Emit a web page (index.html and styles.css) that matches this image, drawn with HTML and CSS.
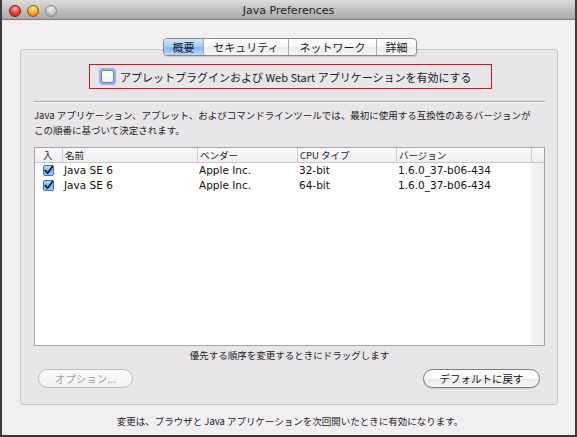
FILE: index.html
```html
<!DOCTYPE html>
<html lang="ja">
<head>
<meta charset="utf-8">
<title>Java Preferences</title>
<link rel="stylesheet" href="styles.css">
</head>
<body>
<div class="window">
  <div class="titlebar">
    <div class="lights">
      <span class="light red"></span>
      <span class="light amber"></span>
      <span class="light gray"></span>
    </div>
    <div class="title">Java Preferences</div>
    <div></div>
  </div>
  <div class="content">
    <div class="tabs">
      <span class="tab selected t1">概要</span>
      <span class="tab t2">セキュリティ</span>
      <span class="tab t3">ネットワーク</span>
      <span class="tab t4">詳細</span>
    </div>
    <div class="group">
      <div class="enable-box">
        <span class="focus-cb"></span>
        <span class="enable-label">アプレットプラグインおよび Web Start アプリケーションを有効にする</span>
      </div>
      <div class="separator"></div>
      <p class="desc">Java アプリケーション、アプレット、およびコマンドラインツールでは、最初に使用する互換性のあるバージョンが<br>この順番に基づいて決定されます。</p>
      <div class="table">
        <div class="thead">
          <span class="th first">入</span>
          <span class="th">名前</span>
          <span class="th">ベンダー</span>
          <span class="th">CPU タイプ</span>
          <span class="th">バージョン</span>
          <span class="th"></span>
        </div>
        <div class="tbody">
          <div class="tr">
            <span class="td first"><svg class="check" viewBox="0 0 11 11"><rect x="0.5" y="0.5" width="10" height="10" rx="1.5" fill="url(#cbg)" stroke="#3d6fb8"/><path d="M2.3 5.6 L4.6 8.3 L9.6 1.2" fill="none" stroke="#0d1e3a" stroke-width="1.7" stroke-linecap="round" stroke-linejoin="round"/><defs><linearGradient id="cbg" x1="0" y1="0" x2="0" y2="1"><stop offset="0" stop-color="#c9def8"/><stop offset="0.5" stop-color="#7fb0ec"/><stop offset="1" stop-color="#a9cdf7"/></linearGradient></defs></svg></span>
            <span class="td">Java SE 6</span>
            <span class="td">Apple Inc.</span>
            <span class="td">32-bit</span>
            <span class="td">1.6.0_37-b06-434</span>
            <span class="td"></span>
          </div>
          <div class="tr">
            <span class="td first"><svg class="check" viewBox="0 0 11 11"><rect x="0.5" y="0.5" width="10" height="10" rx="1.5" fill="url(#cbg)" stroke="#3d6fb8"/><path d="M2.3 5.6 L4.6 8.3 L9.6 1.2" fill="none" stroke="#0d1e3a" stroke-width="1.7" stroke-linecap="round" stroke-linejoin="round"/></svg></span>
            <span class="td">Java SE 6</span>
            <span class="td">Apple Inc.</span>
            <span class="td">64-bit</span>
            <span class="td">1.6.0_37-b06-434</span>
            <span class="td"></span>
          </div>
        </div>
      </div>
      <div class="hint">優先する順序を変更するときにドラッグします</div>
      <div class="buttons">
        <span class="btn disabled options">オプション...</span>
        <span class="btn defaults">デフォルトに戻す</span>
      </div>
    </div>
    <div class="footer">変更は、ブラウザと Java アプリケーションを次回開いたときに有効になります。</div>
  </div>
</div>
</body>
</html>
```
FILE: styles.css
```css
html, body {
  margin: 0;
  padding: 0;
}
body {
  width: 577px;
  height: 437px;
  background: #3b3b3d;
  overflow: hidden;
  font-family: "Noto Sans CJK JP", "DejaVu Sans", sans-serif;
  color: #1c1c1c;
}
.window {
  margin-left: 2px;
  width: 573px;
  height: 435px;
  overflow: hidden;
  display: flex;
  flex-direction: column;
}
.titlebar {
  height: 19px;
  border-bottom: 1px solid #7a7a7a;
  background: linear-gradient(#dcdcdc, #c4c4c4 45%, #a9a9a9);
  display: grid;
  grid-template-columns: 1fr auto 1fr;
  align-items: center;
}
.lights {
  display: flex;
  gap: 6px;
  padding-left: 7px;
  padding-top: 1px;
}
.light {
  width: 12px;
  height: 12px;
  border-radius: 50%;
  box-sizing: border-box;
}
.light.red {
  background: radial-gradient(circle at 50% 30%, #ffc2b8 0, #f0483c 45%, #b5140d 100%);
  border: 1px solid #8a1a14;
}
.light.amber {
  background: radial-gradient(circle at 50% 30%, #fff0b0 0, #f9b030 45%, #c56a00 100%);
  border: 1px solid #9a5a06;
}
.light.gray {
  background: radial-gradient(circle at 50% 30%, #f2f2f2 0, #c9c9c9 50%, #9a9a9a 100%);
  border: 1px solid #8c8c8c;
}
.title {
  font-family: "DejaVu Sans", sans-serif;
  font-size: 11px;
  color: #222;
  line-height: 19px;
  padding-top: 1px;
}
.content {
  flex: 1;
  background: #f2eff2;
  padding: 18px 17px 0 18px;
  display: flex;
  flex-direction: column;
}
.tabs {
  align-self: center;
  position: relative;
  z-index: 1;
  display: flex;
  height: 18px;
  box-sizing: border-box;
  border: 1px solid #8a898c;
  border-radius: 4px;
  overflow: hidden;
  background: linear-gradient(#ffffff, #f6f6f6 50%, #ebebeb 51%, #f7f7f7);
  box-shadow: 0 1px 1px rgba(0,0,0,0.12);
  margin-left: 2px;
}
.tab {
  font-size: 11px;
  line-height: 16px;
  text-align: center;
  box-sizing: border-box;
  color: #1a1a1a;
}
.tab + .tab {
  border-left: 1px solid #a9a8ab;
}
.t1 { width: 39px; }
.t2 { width: 85px; }
.t3 { width: 88px; }
.t4 { width: 40px; }
.tab.selected {
  background: linear-gradient(#d3e5fb, #a9cbf4 50%, #84b5ee 51%, #b8d7fa);
  color: #0e1c33;
}
.group {
  margin-top: -7px;
  width: 538px;
  height: 356px;
  box-sizing: border-box;
  border: 1px solid #c8c5c8;
  border-radius: 3px;
  background: #e9e6e9;
  padding: 14px 12px 0 13px;
  display: flex;
  flex-direction: column;
}
.enable-box {
  align-self: center;
  margin-left: 2px;
  width: 403px;
  height: 25px;
  box-sizing: border-box;
  border: 1px solid #dd1111;
  display: flex;
  align-items: center;
  padding-left: 11px;
  gap: 6px;
}
.focus-cb {
  width: 13px;
  height: 13px;
  box-sizing: border-box;
  border: 1px solid #6b88b0;
  border-radius: 2px;
  background: linear-gradient(#ffffff, #f0f0f0);
  box-shadow: 0 0 1px 2px rgba(110, 160, 230, 0.75);
}
.enable-label {
  font-size: 11px;
  line-height: 14px;
  white-space: nowrap;
  color: #1c1c1c;
}
.separator {
  margin-top: 12px;
  height: 0;
  border-top: 1px solid #a8a6a8;
  border-bottom: 1px solid #fbfafb;
}
.desc {
  margin: 5px 0 0 0;
  font-size: 9.5px;
  line-height: 15px;
  white-space: nowrap;
  color: #1c1c1c;
}
.table {
  margin-top: 9px;
  height: 199px;
  box-sizing: border-box;
  border: 1px solid #a6a4a6;
  display: flex;
  flex-direction: column;
  background: #fff;
}
.thead, .tr {
  display: grid;
  grid-template-columns: 27px 135px 100px 99px 135px 1fr;
}
.thead {
  height: 15px;
  box-sizing: border-box;
  border-bottom: 1px solid #c9c7c9;
  background: linear-gradient(#fbfafb, #efedef);
}
.th {
  font-size: 9.5px;
  line-height: 14px;
  padding-left: 2px;
  border-left: 1px solid #cfcdcf;
  white-space: nowrap;
  color: #1c1c1c;
}
.th.first {
  border-left: none;
  padding-left: 8px;
}
.tbody {
  flex: 1;
  background: linear-gradient(to right, #ffffff 0, #ffffff 494px, #f6f4f7 497px, #eeecef 509px);
}
.tr {
  height: 15px;
}
.td {
  font-family: "DejaVu Sans", sans-serif;
  font-size: 10.5px;
  line-height: 15px;
  padding-left: 2px;
  white-space: nowrap;
  color: #111;
}
.td.first {
  padding-left: 8px;
  display: flex;
  align-items: center;
}
.check {
  width: 11px;
  height: 11px;
  display: block;
}
.hint {
  margin-top: 3px;
  font-size: 9.5px;
  line-height: 12px;
  text-align: center;
  color: #1c1c1c;
}
.buttons {
  margin-top: 8px;
  display: flex;
  justify-content: space-between;
  padding: 0 5px 0 4px;
}
.btn {
  height: 19px;
  box-sizing: border-box;
  border: 1px solid #7d7c7e;
  border-radius: 10px;
  background: linear-gradient(#ffffff, #f7f7f7 50%, #e9e9e9 51%, #f9f9f9);
  font-size: 10.5px;
  line-height: 17px;
  text-align: center;
  color: #141414;
  box-shadow: 0 1px 1px rgba(0,0,0,0.12);
}
.btn.options {
  width: 95px;
}
.btn.defaults {
  width: 117px;
}
.btn.disabled {
  border-color: #bdbbbe;
  color: #a3a1a4;
  background: linear-gradient(#fcfcfc, #f3f2f3);
  box-shadow: none;
}
.footer {
  margin-top: 9px;
  font-size: 9.5px;
  line-height: 14px;
  text-align: center;
  color: #1c1c1c;
  padding-left: 2px;
}
```
